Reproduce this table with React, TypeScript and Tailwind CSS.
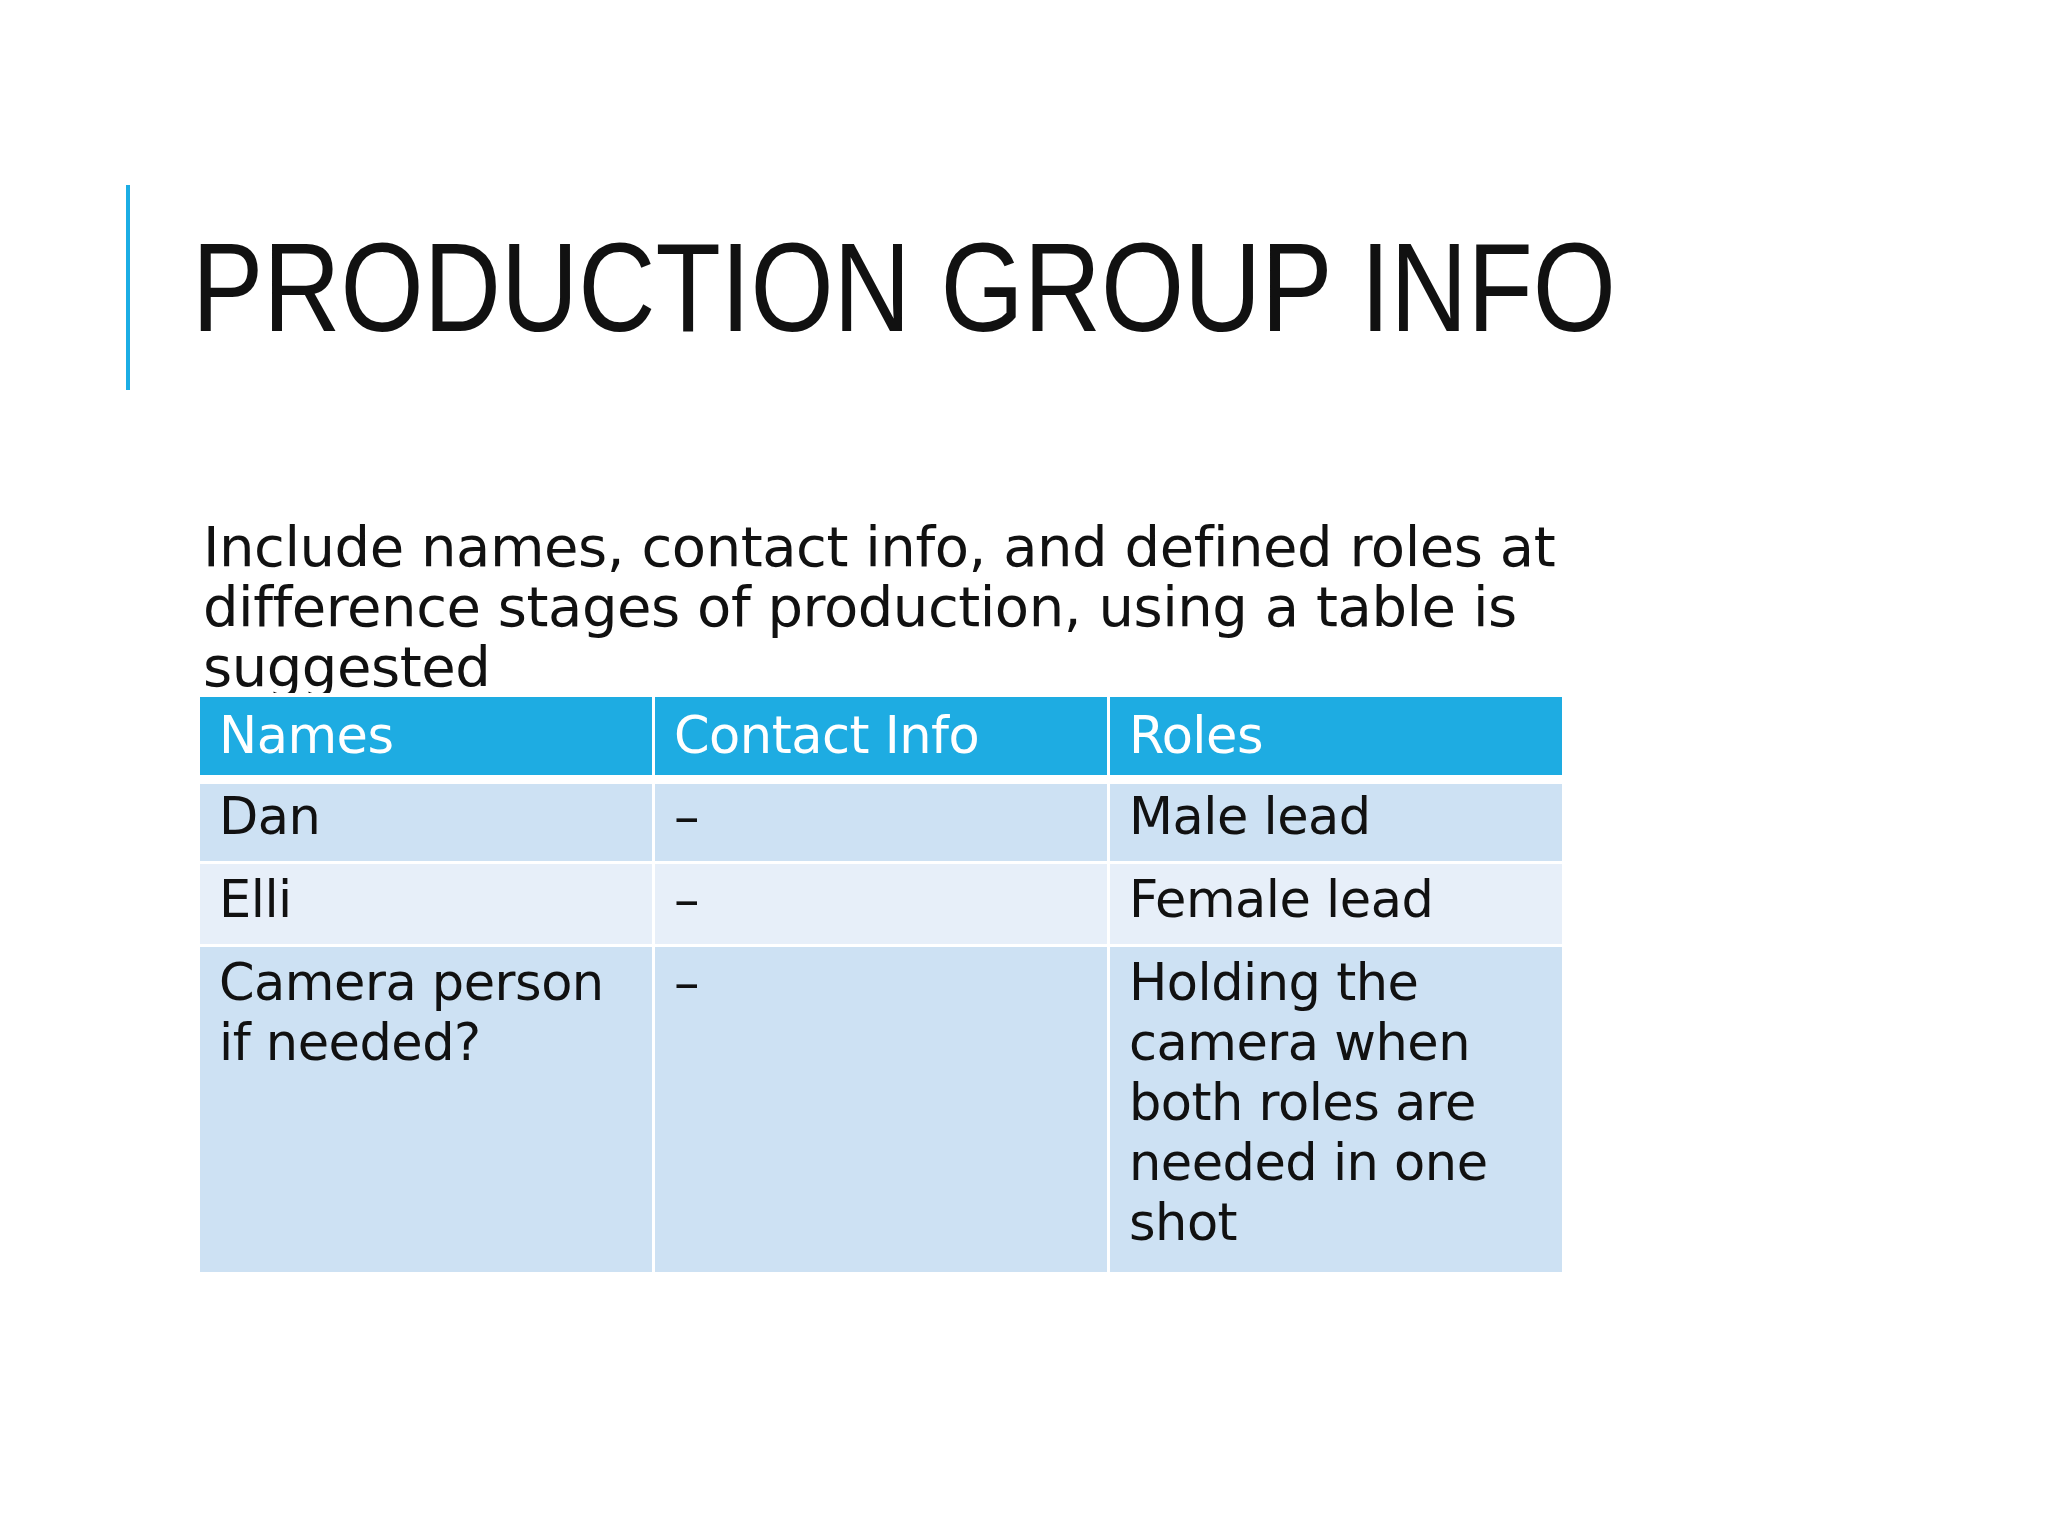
const BODY_FONT = "font-['DejaVu_Sans',sans-serif]";

type Row = {
  cells: [string, string, string];
  height: string;
  pad: string;
  bg: string;
};

const ROWS: Row[] = [
  { cells: ["Dan", "–", "Male lead"], height: "h-[77px]", pad: "pt-[3px]", bg: "bg-[#cde1f3]" },
  { cells: ["Elli", "–", "Female lead"], height: "h-[80px]", pad: "pt-[6px]", bg: "bg-[#e7eff9]" },
  {
    cells: ["Camera person if needed?", "–", "Holding the camera when both roles are needed in one shot"],
    height: "h-[325px]",
    pad: "pt-[6px]",
    bg: "bg-[#cde1f3]",
  },
];

export default function App() {
  return (
    <div className="w-[2048px] h-[1536px] overflow-hidden bg-white text-[#111111]">
      <div className="flex items-start pt-[185px] pl-[126px]">
        <div className="w-[4px] h-[205px] bg-[#1cade4]" />
        {/* no narrow face installed: squeeze the regular one */}
        <h1 className="ml-[62px] mt-[39px] origin-left scale-x-[0.842] whitespace-nowrap text-[127px] leading-[127px] font-normal text-[#111111] font-['Liberation_Sans_Narrow','Arial_Narrow','Liberation_Sans',sans-serif]">
          PRODUCTION GROUP INFO
        </h1>
      </div>

      <div className="ml-[200px] w-[1400px]">
        <p
          className={`mt-[127px] h-[176px] overflow-hidden pl-[3px] text-[56px] leading-[60px] tracking-[-0.45px] ${BODY_FONT}`}
        >
          Include names, contact info, and defined roles at difference stages of production, using a table is
          suggested
        </p>

        <div className={`mt-[4px] w-[1362px] text-[51px] leading-[60px] tracking-[-0.5px] ${BODY_FONT}`}>
          <div className="grid grid-cols-3 gap-x-[3px]">
            {["Names", "Contact Info", "Roles"].map((h) => (
              <div key={h} className="h-[78px] bg-[#1eace2] pl-[19px] pr-[15px] pt-[9px] text-white">
                {h}
              </div>
            ))}
          </div>

          {ROWS.map((row, i) => (
            <div key={i} className={`grid grid-cols-3 gap-x-[3px] ${i === 0 ? "mt-[9px]" : "mt-[3px]"}`}>
              {row.cells.map((c, j) => (
                <div key={j} className={`${row.height} ${row.pad} ${row.bg} pl-[19px] pr-[15px] text-[#111111]`}>
                  {c}
                </div>
              ))}
            </div>
          ))}
        </div>
      </div>
    </div>
  );
}
